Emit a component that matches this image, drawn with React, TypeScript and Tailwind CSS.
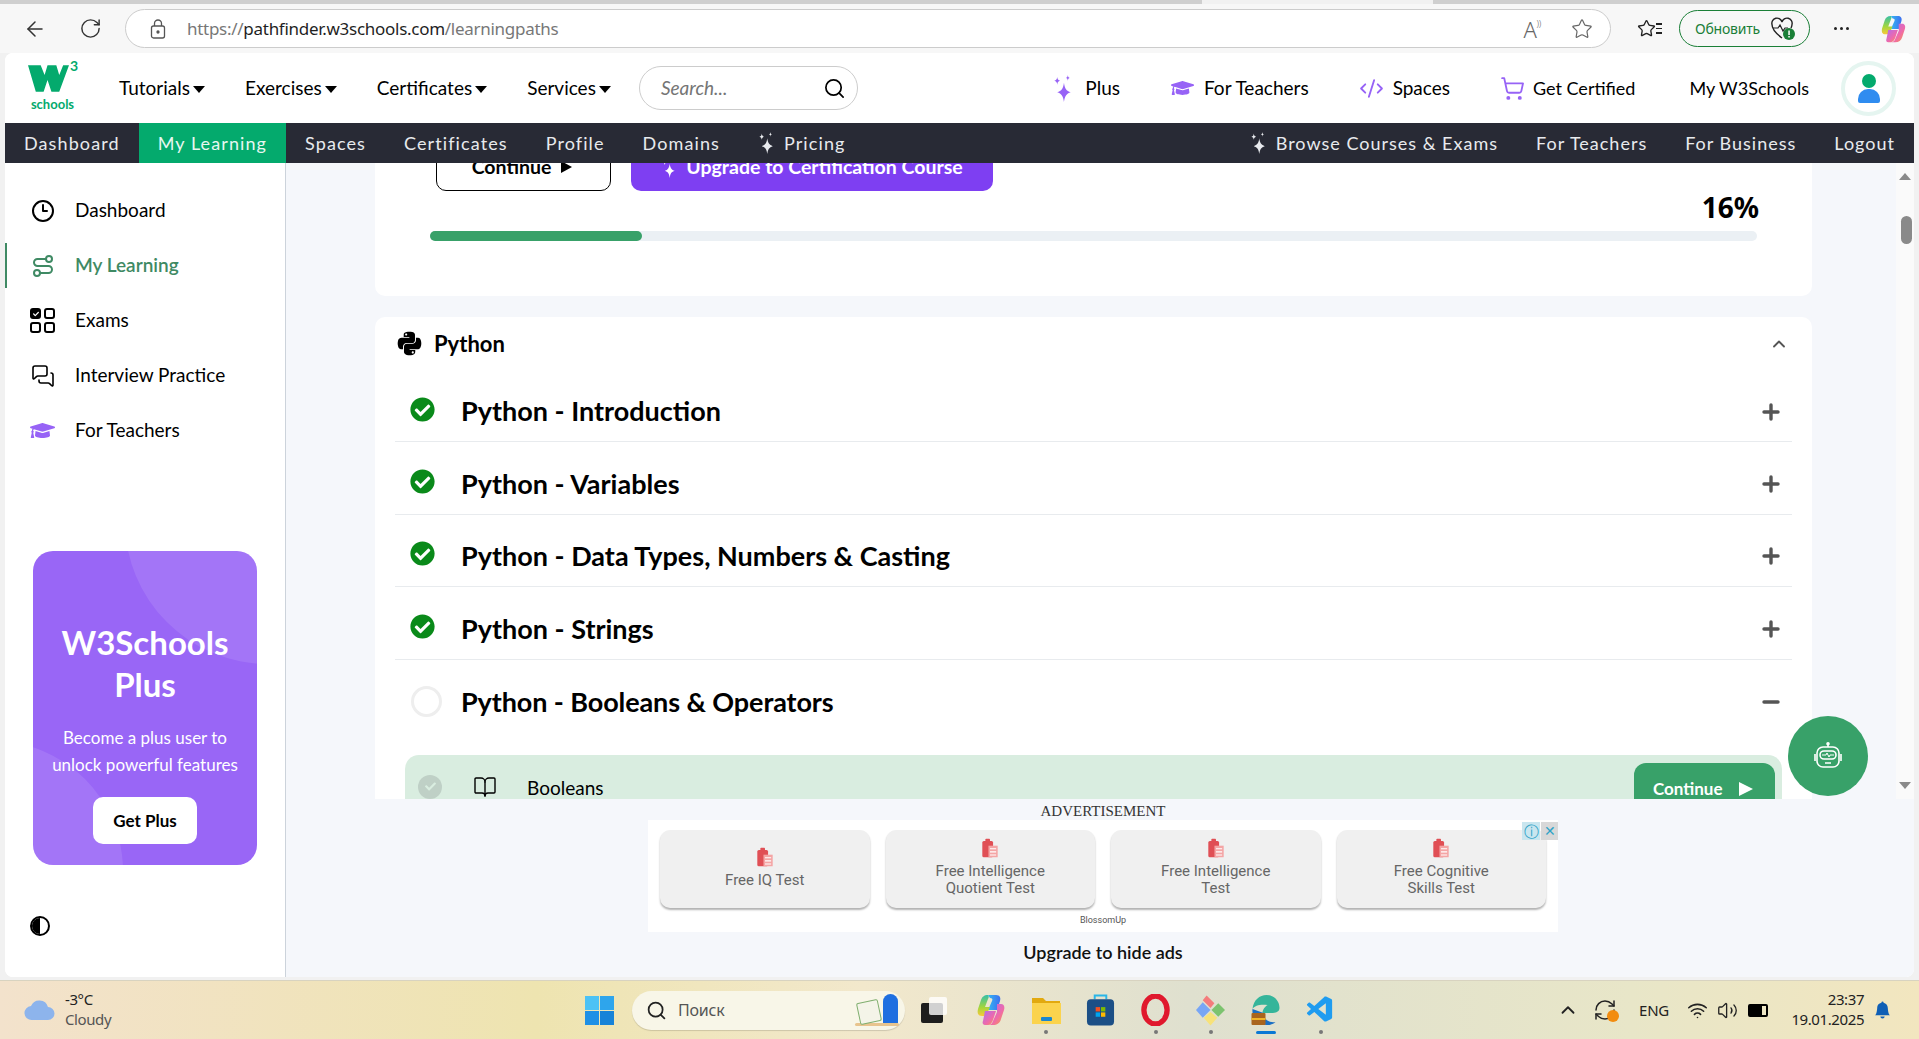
import { ArrowLeft, RotateCw, Star, Search, ChevronUp, Plus, Minus, BookOpen, Route, MessagesSquare, ShoppingCart, CodeXml, Clock3, Wifi, Volume2, RefreshCw } from "lucide-react";
import { FaPython, FaGraduationCap, FaCheckCircle, FaCheck } from "react-icons/fa";
import { BsBellFill } from "react-icons/bs";
import { VscVscode } from "react-icons/vsc";

const tutorials = ["Tutorials", "Exercises", "Certificates", "Services"];
const lessons = ["Python - Introduction", "Python - Variables", "Python - Data Types, Numbers & Casting", "Python - Strings"];
const ads = [
  ["Free IQ Test"],
  ["Free Intelligence", "Quotient Test"],
  ["Free Intelligence", "Test"],
  ["Free Cognitive", "Skills Test"],
];

function Sparkles({ className }: { className?: string }) {
  return (
    <svg viewBox="0 0 20 28" className={className} fill="currentColor">
      <path d="M11 8C11.8 14 13.5 16.5 18 18C13.5 19.5 11.8 22 11 28C10.2 22 8.5 19.5 4 18C8.5 16.5 10.2 14 11 8Z" />
      <path d="M4 2C4.3 4.5 5 5.4 7 6C5 6.6 4.3 7.5 4 10C3.7 7.5 3 6.6 1 6C3 5.4 3.7 4.5 4 2Z" />
      <path d="M15 0C15.2 2 15.7 2.6 17 3C15.7 3.4 15.2 4 15 6C14.8 4 14.3 3.4 13 3C14.3 2.6 14.8 2 15 0Z" />
    </svg>
  );
}

function Caret() {
  return <span className="ml-[3px] mt-[2px] h-0 w-0 border-x-[6px] border-t-[7px] border-x-transparent border-t-black" />;
}

function ExamsIcon() {
  return (
    <div className="grid w-[25px] grid-cols-2 gap-[3px]">
      <div className="flex h-[11px] items-center justify-center rounded-[3px] bg-black text-white">
        <FaCheck className="h-[6px] w-[6px]" />
      </div>
      <div className="h-[11px] rounded-[3px] border-2 border-black" />
      <div className="h-[11px] rounded-[3px] border-2 border-black" />
      <div className="h-[11px] rounded-[3px] border-2 border-black" />
    </div>
  );
}

function ClipboardIcon() {
  return (
    <svg viewBox="0 0 22 26" className="h-[20px] w-[20px]">
      <rect x="1" y="4" width="14" height="21" rx="2" fill="#e04f55" />
      <rect x="5" y="1" width="6" height="5" rx="1" fill="#e04f55" />
      <rect x="9" y="10" width="12" height="15" fill="#f4a5a5" />
      <path d="M11 14h8M11 18h8M11 22h8" stroke="#fff" strokeWidth="1.4" />
    </svg>
  );
}

function CopilotIcon({ className, id }: { className?: string; id: string }) {
  return (
    <svg viewBox="0 0 30 32" className={className}>
      <defs>
        <linearGradient id={`${id}a`} x1="0" y1="0" x2="1" y2="0">
          <stop offset="0" stopColor="#35b6f2" />
          <stop offset="1" stopColor="#3d6ff0" />
        </linearGradient>
        <linearGradient id={`${id}b`} x1="0" y1="0" x2="1" y2="1">
          <stop offset="0" stopColor="#b06cf0" />
          <stop offset="0.6" stopColor="#f06aa8" />
          <stop offset="1" stopColor="#f8a03c" />
        </linearGradient>
        <linearGradient id={`${id}c`} x1="0" y1="0" x2="0" y2="1">
          <stop offset="0" stopColor="#35c0a8" />
          <stop offset="0.6" stopColor="#a6d63a" />
          <stop offset="1" stopColor="#f8c83c" />
        </linearGradient>
      </defs>
      <path d="M12 1h8c4 0 5 3 4 6l-3 9h-9l4-9c1-2 0-3-2-3Z" fill={`url(#${id}a)`} />
      <path d="M21 10h4c3 0 4 3 3 6l-3 9c-1 4-4 6-8 6h-5c2 0 4-1 5-4l4-9Z" fill={`url(#${id}b)`} />
      <path d="M12 1C8 1 6 3 5 6L2 15c-1 4 0 7 4 7h4l4-9H9l3-8c1-2 1-3 0-4Z" fill={`url(#${id}c)`} />
      <path d="M9 17h11l-3 9c-1 3-3 5-5 5H9c-2 0-3-2-2-4Z" fill={`url(#${id}b)`} />
    </svg>
  );
}

function Toolbar() {
  return (
    <div className="flex h-[49px] shrink-0 items-center bg-[#f7f7f7] text-[#333]">
      <ArrowLeft className="ml-[23px] h-[24px] w-[24px]" strokeWidth={1.5} />
      <RotateCw className="ml-[32px] h-[23px] w-[23px]" strokeWidth={1.5} />
      <div className="ml-[23px] flex h-[39px] w-[1486px] items-center rounded-full border border-[#ccc] bg-white pl-[24px] pr-[17px] font-['Noto_Sans'] text-[17px] tracking-[-0.28px]">
        <svg viewBox="0 0 16 20" className="h-[20px] w-[16px] text-[#555]" fill="none" stroke="currentColor" strokeWidth="1.3">
          <rect x="1.5" y="7" width="13" height="12" rx="2" />
          <path d="M4.5 7V4.5a3.5 3.5 0 0 1 7 0V7" />
          <circle cx="8" cy="13" r="1" fill="currentColor" />
        </svg>
        <span className="ml-[21px] text-[#777]">https://</span>
        <span className="text-[#1f1f1f]">pathfinder.w3schools.com</span>
        <span className="text-[#777]">/learningpaths</span>
        <div className="ml-auto flex items-center gap-[30px] text-[#666]">
          <span className="flex items-start text-[22px] font-light leading-none">
            A<span className="text-[9px] leading-[12px]">))</span>
          </span>
          <Star className="h-[22px] w-[22px]" strokeWidth={1.3} />
        </div>
      </div>
      <div className="ml-[26px] flex w-[26px] items-center">
        <Star className="h-[19px] w-[19px] text-[#222]" strokeWidth={1.7} />
        <div className="flex flex-col gap-[3px]">
          <span className="h-[1.5px] w-[6px] bg-[#222]" />
          <span className="h-[1.5px] w-[6px] bg-[#222]" />
          <span className="h-[1.5px] w-[6px] bg-[#222]" />
        </div>
      </div>
      <div className="ml-[16px] flex h-[37px] w-[131px] items-center rounded-full border border-[#1a7f37] pl-[15px] font-['Noto_Sans'] text-[14px] tracking-[-0.2px] text-[#1a7f37]">
        Обновить
        <svg viewBox="0 0 26 24" className="ml-[10px] h-[24px] w-[26px]">
          <path d="M12 21C4 15 2 11 2 7.500A5 5 0 0 1 12 5a5 5 0 0 1 10 2.500C22 9 21.500 10 21 11" fill="none" stroke="#222" strokeWidth="1.4" />
          <path d="M3 11h5l2-3 3 6 2-3h3" fill="none" stroke="#222" strokeWidth="1.2" />
          <circle cx="19" cy="17" r="6" fill="#1a7f37" />
          <rect x="18.300" y="13.500" width="1.500" height="4.500" fill="#fff" />
          <rect x="18.300" y="19" width="1.500" height="1.500" fill="#fff" />
        </svg>
      </div>
      <div className="ml-[24px] flex gap-[3px]">
        <span className="h-[3px] w-[3px] rounded-full bg-[#222]" />
        <span className="h-[3px] w-[3px] rounded-full bg-[#222]" />
        <span className="h-[3px] w-[3px] rounded-full bg-[#222]" />
      </div>
      <CopilotIcon className="ml-[31px] h-[28px] w-[27px]" id="cptop" />
    </div>
  );
}

function Header() {
  return (
    <div className="flex h-[70px] shrink-0 items-center bg-white text-[19px] text-black">
      <div className="relative ml-[23px] flex w-[49px] flex-col items-center">
        <svg viewBox="0 0 42 27" className="h-[27px] w-[41px] self-start">
          <path d="M0 0h13l4 10 3-10h9l3 10 4-10h6L32 27h-8l-4-12-4 12H8Z" fill="#04aa6d" />
        </svg>
        <span className="absolute -right-[1px] -top-[6px] text-[14px] font-bold leading-none text-[#04aa6d]">3</span>
        <span className="mt-[4px] text-[13px] font-bold leading-[16px] text-[#04aa6d]">schools</span>
      </div>
      <nav className="ml-[42px] flex items-center gap-[40px]">
        {tutorials.map((t) => (
          <div key={t} className="flex items-center">
            {t}
            <Caret />
          </div>
        ))}
      </nav>
      <div className="ml-[28px] flex h-[44px] w-[219px] items-center justify-between rounded-full border border-[#ccc] pl-[21px] pr-[11px]">
        <span className="italic text-[#757575]">Search...</span>
        <Search className="h-[23px] w-[23px]" strokeWidth={1.8} />
      </div>
      <div className="ml-auto flex items-center pr-[18px]">
        <div className="flex items-center">
          <Sparkles className="h-[27px] w-[20px] text-[#9763f6]" />
          <span className="ml-[12px]">Plus</span>
        </div>
        <div className="ml-[51px] flex items-center">
          <FaGraduationCap className="h-[22px] w-[23px] text-[#9763f6]" />
          <span className="ml-[10px]">For Teachers</span>
        </div>
        <div className="ml-[50px] flex items-center">
          <CodeXml className="h-[25px] w-[25px] text-[#9763f6]" strokeWidth={1.8} />
          <span className="ml-[9px]">Spaces</span>
        </div>
        <div className="ml-[50px] flex items-center">
          <ShoppingCart className="h-[25px] w-[25px] text-[#9763f6]" strokeWidth={1.8} />
          <span className="ml-[8px] text-[18px]">Get Certified</span>
        </div>
        <span className="ml-[54px] text-[18px]">My W3Schools</span>
        <div className="ml-[32px] flex h-[55px] w-[55px] flex-col items-center justify-center rounded-full border-4 border-[#e5f5f0]">
          <div className="h-[14px] w-[14px] rounded-full bg-[#04aa6d]" />
          <div className="mt-[1px] h-[14px] w-[22px] rounded-t-[10px] rounded-b-[2px] bg-[#2f8cf0]" />
        </div>
      </div>
    </div>
  );
}

function DarkBar() {
  return (
    <div className="flex h-[40px] shrink-0 items-center bg-[#282a35] text-[18px] tracking-[1.1px] text-[#e8eaee]">
      <div className="px-[19px]">Dashboard</div>
      <div className="flex h-full items-center bg-[#04aa6d] px-[19px] text-[#e7f7f0]">My Learning</div>
      <div className="px-[19px]">Spaces</div>
      <div className="px-[19px]">Certificates</div>
      <div className="px-[19px]">Profile</div>
      <div className="px-[19px]">Domains</div>
      <div className="flex items-center px-[19px]">
        <Sparkles className="mr-[9px] h-[22px] w-[17px]" />
        Pricing
      </div>
      <div className="ml-auto flex items-center tracking-[1px]">
        <div className="flex items-center px-[19px]">
          <Sparkles className="mr-[9px] h-[22px] w-[17px]" />
          Browse Courses & Exams
        </div>
        <div className="px-[19px]">For Teachers</div>
        <div className="px-[19px]">For Business</div>
        <div className="px-[19px]">Logout</div>
      </div>
    </div>
  );
}

function Sidebar() {
  const items = [
    { label: "Dashboard", icon: <Clock3 className="h-[24px] w-[24px]" strokeWidth={2} /> },
    { label: "My Learning", icon: <Route className="h-[24px] w-[24px]" strokeWidth={2} />, active: true },
    { label: "Exams", icon: <ExamsIcon /> },
    { label: "Interview Practice", icon: <MessagesSquare className="h-[24px] w-[24px]" strokeWidth={1.6} /> },
    { label: "For Teachers", icon: <FaGraduationCap className="h-[25px] w-[25px] text-[#9763f6]" /> },
  ];
  return (
    <aside className="flex w-[281px] shrink-0 flex-col border-r border-[#ccd3db] bg-white text-[19px] text-black">
      <div className="mt-[25px] flex flex-col gap-[10px]">
        {items.map((it) => (
          <div
            key={it.label}
            className={
              it.active
                ? "flex h-[45px] items-center border-l-[2px] border-[#3f8a64] pl-[23px] font-semibold text-[#3f8a64]"
                : "flex h-[45px] items-center border-l-[2px] border-transparent pl-[23px]"
            }
          >
            <span className="flex w-[25px] justify-center">{it.icon}</span>
            <span className="ml-[20px]">{it.label}</span>
          </div>
        ))}
      </div>
      <div className="relative ml-[28px] mt-[98px] flex h-[314px] w-[224px] flex-col items-center overflow-hidden rounded-[20px] bg-[#9966f6] text-white">
        <div className="absolute -top-[173px] left-[92px] h-[286px] w-[286px] rounded-full bg-white/10" />
        <div className="absolute -left-[170px] top-[190px] h-[260px] w-[260px] rounded-full bg-white/10" />
        <div className="relative mt-[70px] text-center text-[33px] font-bold leading-[42px]">
          W3Schools
          <br />
          Plus
        </div>
        <div className="relative mt-[19px] text-center text-[17px] leading-[27px]">
          Become a plus user to
          <br />
          unlock powerful features
        </div>
        <div className="relative mt-[19px] flex h-[47px] w-[104px] items-center justify-center rounded-[10px] bg-white text-[17px] font-bold text-black">
          Get Plus
        </div>
      </div>
      <div className="ml-[25px] mt-[51px] flex h-[20px] w-[20px] overflow-hidden rounded-full border-2 border-black">
        <div className="h-full w-1/2 bg-black" />
      </div>
    </aside>
  );
}

function LessonRow({ title }: { title: string }) {
  return (
    <div className="flex h-[72.4px] items-center border-b border-[#e8ebee] pt-[12px]">
      <FaCheckCircle className="ml-[15px] -mt-[5px] h-[25px] w-[25px] text-[#0a8a1a]" />
      <span className="ml-[26px] text-[27px] font-bold text-black">{title}</span>
      <Plus className="ml-auto mr-[9px] h-[24px] w-[24px] text-[#555]" strokeWidth={3.4} />
    </div>
  );
}

function Scrollbar() {
  return (
    <div className="flex w-[18px] shrink-0 flex-col items-center bg-[#fafafa] pt-[10px]">
      <div className="h-0 w-0 border-x-[6px] border-b-[7px] border-x-transparent border-b-[#8a8a8a]" />
      <div className="ml-[3px] mt-[36px] h-[28px] w-[11px] rounded-full bg-[#8a8a8a]" />
      <div className="mt-auto mb-[10px] h-0 w-0 border-x-[6px] border-t-[7px] border-x-transparent border-t-[#8a8a8a]" />
    </div>
  );
}

function Main() {
  return (
    <main className="flex min-w-0 flex-1 flex-col bg-[#f5f7fb]">
      <div className="relative flex h-[636px] shrink-0 overflow-hidden">
        <div className="min-w-0 flex-1 pl-[89px] pr-[84px]">
          <div className="-mt-[40px] rounded-b-[10px] bg-white pb-[55px] pl-[55px] pr-[55px] pt-[20px]">
            <div className="flex gap-[20px] pl-[6px]">
              <div className="flex h-[48px] w-[175px] items-center justify-center rounded-[10px] border border-black pr-[3px] text-[19.5px] font-bold text-black">
                Continue
                <span className="ml-[10px] h-0 w-0 border-y-[6px] border-l-[11px] border-y-transparent border-l-black" />
              </div>
              <div className="flex h-[48px] w-[362px] items-center justify-center rounded-[10px] bg-[#7e3ff2] text-[19.5px] font-bold text-white">
                <Sparkles className="mr-[9px] mt-[2px] h-[20px] w-[16px]" />
                Upgrade to Certification Course
              </div>
            </div>
            <div className="-mr-[2px] h-[40px] pt-[1px] text-right font-['Noto_Sans'] text-[28px] font-bold leading-[30px] text-black">16%</div>
            <div className="h-[10px] rounded-full bg-[#ebf0f4]">
              <div className="h-full w-[212px] rounded-full bg-[#38a169]" />
            </div>
          </div>
          <div className="mt-[21px] rounded-t-[10px] bg-white pl-[20px] pr-[20px]">
            <div className="flex h-[53px] items-center">
              <FaPython className="ml-[1px] h-[27px] w-[27px] text-black" />
              <span className="ml-[11px] text-[22px] font-bold text-black">Python</span>
              <ChevronUp className="ml-auto mr-[3px] h-[20px] w-[20px] text-[#555]" strokeWidth={2.2} />
            </div>
            {lessons.map((l) => (
              <LessonRow key={l} title={l} />
            ))}
            <div className="flex h-[72.4px] items-center pt-[12px]">
              <div className="ml-[16px] h-[31px] w-[31px] rounded-full border-[3px] border-[#eeeeee]" />
              <span className="ml-[19px] text-[27px] font-bold tracking-[-0.1px] text-black">Python - Booleans & Operators</span>
              <Minus className="ml-auto mr-[9px] h-[24px] w-[24px] text-[#555]" strokeWidth={3.4} />
            </div>
            <div className="ml-[10px] mr-[10px] mt-[23px] flex h-[70px] items-start rounded-[14px] bg-[#d9ede0] pl-[13px] pr-[7px] pt-[8px]">
              <div className="mt-[12px] flex h-[24px] w-[24px] items-center justify-center rounded-full bg-[#bfd0c6] text-[#d9ede0]">
                <FaCheck className="h-[11px] w-[11px]" />
              </div>
              <BookOpen className="ml-[31px] mt-[12px] h-[24px] w-[24px] text-black" strokeWidth={1.4} />
              <span className="ml-[30px] mt-[13px] text-[19px] leading-[24px] text-black">Booleans</span>
              <div className="ml-auto flex h-[60px] w-[141px] items-start rounded-[12px] bg-[#38a169] pl-[19px] pt-[14px] text-[17px] font-bold leading-[24px] text-white">
                Continue
                <span className="ml-[16px] mt-[5px] h-0 w-0 border-y-[7px] border-l-[14px] border-y-transparent border-l-white" />
              </div>
            </div>
          </div>
        </div>
        <Scrollbar />
        <div className="absolute bottom-[3px] right-[46px] flex h-[80px] w-[80px] items-center justify-center rounded-full bg-[#38a169]">
          <svg viewBox="0 0 30 28" className="h-[28px] w-[30px]" fill="none" stroke="#fff" strokeWidth="1.6">
            <path d="M15 5V2" />
            <circle cx="15" cy="1.800" r="1" fill="#fff" />
            <rect x="4" y="5" width="22" height="20" rx="6" />
            <rect x="7" y="9" width="16" height="8" rx="4" />
            <path d="M9 13h4l1-2 2 4 1-2h4" strokeWidth="1" />
            <path d="M12 21h6M2 12v7M28 12v7" />
          </svg>
        </div>
      </div>
      <div className="flex flex-1 flex-col items-center pl-[6px]">
        <div className="mt-[4px] font-['Liberation_Serif'] text-[15px] leading-[17px] text-[#333]">ADVERTISEMENT</div>
        <div className="relative flex h-[112px] w-[910px] flex-col bg-white px-[12px] pt-[10px]">
          <div className="absolute right-0 top-[2px] flex gap-[1px]">
            <div className="flex h-[18px] w-[18px] items-center justify-center bg-[#c9e6ef] text-[15px] leading-none text-[#2fa3c7]">ⓘ</div>
            <div className="flex h-[18px] w-[17px] items-center justify-center bg-[#d8d8d8] text-[14px] leading-none text-[#2fa3c7]">✕</div>
          </div>
          <div className="flex gap-[16px]">
            {ads.map((lines, i) => (
              <div key={i} className="flex h-[78px] w-[210px] flex-col items-center justify-center rounded-[10px] bg-[#f0f0f0] font-['Roboto'] text-[15px] leading-[17px] text-[#666] shadow-[0_2px_2px_rgba(0,0,0,0.3)]">
                <div className="-mt-[3px]">
                  <ClipboardIcon />
                </div>
                <div className="mt-[5px] text-center">
                  {lines.map((l) => (
                    <div key={l}>{l}</div>
                  ))}
                </div>
              </div>
            ))}
          </div>
          <div className="mt-[6px] text-center font-['Roboto'] text-[9px] leading-[12px] text-[#555]">BlossomUp</div>
        </div>
        <div className="mt-[11px] text-[18px] font-semibold leading-[18px] text-[#111]">Upgrade to hide ads</div>
      </div>
    </main>
  );
}

function AppIcon({ children, dot, active }: { children: React.ReactNode; dot?: boolean; active?: boolean }) {
  return (
    <div className="relative ml-[24px] flex w-[31px] justify-center">
      {children}
      {dot && <span className="absolute -bottom-[8px] h-[4px] w-[4px] rounded-full bg-[#777]" />}
      {active && <span className="absolute -bottom-[8px] h-[3px] w-[20px] rounded-full bg-[#0a78d4]" />}
    </div>
  );
}

function Taskbar() {
  return (
    <div className="flex h-[59px] shrink-0 items-center border-t border-[#d8d3c0] bg-[linear-gradient(90deg,#f3e2cc_0%,#eee4b0_28%,#f2e8cc_45%,#dfe0cf_62%,#e8e6c8_85%,#f2e6bf_100%)] font-['Noto_Sans'] text-[#222]">
      <svg viewBox="0 0 32 22" className="ml-[24px] h-[22px] w-[32px]">
        <path d="M8 21a7 7 0 0 1-1-14 9 9 0 0 1 17 1 6.500 6.500 0 0 1 0 13Z" fill="#8db4ec" />
      </svg>
      <div className="ml-[9px] flex w-[60px] -translate-y-[1px] flex-col text-[15px] leading-[20px] tracking-[-0.4px]">
        <span>-3°C</span>
        <span className="text-[#555]">Cloudy</span>
      </div>
      <div className="ml-[460px] grid h-[29px] w-[29px] grid-cols-2 gap-[1px]">
        <div className="bg-[#4cc2f5]" />
        <div className="bg-[#2ea5ec]" />
        <div className="bg-[#1e90e6]" />
        <div className="bg-[#1783d8]" />
      </div>
      <div className="ml-[18px] flex h-[39px] w-[273px] items-center rounded-full bg-[#f8f6e8] pl-[14px] pr-[6px] shadow-[0_1px_1px_rgba(0,0,0,0.15)]">
        <Search className="h-[21px] w-[21px]" strokeWidth={2} />
        <span className="ml-[11px] text-[16px] tracking-[-0.2px] text-[#555]">Поиск</span>
        <div className="ml-auto flex flex-col items-end">
          <div className="flex items-end pr-[1px]">
            <div className="h-[22px] w-[22px] -rotate-12 rounded-[2px] border border-[#7fae6e] bg-[#f4f4e8]" />
            <div className="ml-[3px] h-[29px] w-[15px] rounded-t-full rounded-b-[3px] bg-[#1f6fe0]" />
          </div>
          <div className="h-[3px] w-[44px] rounded-full bg-[#e8c48e]" />
        </div>
      </div>
      <svg viewBox="0 0 26 26" className="ml-[16px] h-[26px] w-[26px]">
        <rect x="0" y="6" width="22" height="20" rx="2" fill="#1d1d1d" />
        <rect x="8" y="0" width="18" height="18" rx="2" fill="#ffffff" fillOpacity="0.8" />
      </svg>
      <div className="ml-[29px] flex w-[30px] flex-col items-center">
        <CopilotIcon className="h-[32px] w-[30px]" id="cptask" />
      </div>
      <AppIcon dot>
        <svg viewBox="0 0 30 30" className="h-[32px] w-[30px]">
          <path d="M1 3h11l3 3h14v22H1Z" fill="#e2a90f" />
          <rect x="1" y="8" width="29" height="21" fill="#fbd34d" />
          <rect x="10" y="22" width="11" height="4" rx="1" fill="#1a86d0" />
        </svg>
      </AppIcon>
      <AppIcon>
        <svg viewBox="0 0 30 32" className="h-[32px] w-[29px]">
          <path d="M9 5V1h12v4" fill="none" stroke="#29b6e8" strokeWidth="2" />
          <rect x="1" y="5" width="28" height="27" rx="4" fill="#1c4f86" />
          <rect x="10" y="13" width="4.500" height="4.500" fill="#f25022" />
          <rect x="15.500" y="13" width="4.500" height="4.500" fill="#7fba00" />
          <rect x="10" y="18.500" width="4.500" height="4.500" fill="#00a4ef" />
          <rect x="15.500" y="18.500" width="4.500" height="4.500" fill="#ffb900" />
        </svg>
      </AppIcon>
      <AppIcon dot>
        <svg viewBox="0 0 30 32" className="h-[32px] w-[29px]">
          <ellipse cx="15" cy="16" rx="12" ry="14.500" fill="none" stroke="#e0182d" strokeWidth="5.500" />
        </svg>
      </AppIcon>
      <AppIcon dot>
        <svg viewBox="0 0 32 32" className="h-[32px] w-[31px]">
          <path d="M16 14 8 6l4-5 8 8Z" fill="#f47c7c" />
          <path d="M16 16 8 8 1 16l7 8Z" fill="#78a6f5" />
          <path d="M17 16l7-7 7 7-7 7Z" fill="#7cc36f" />
          <path d="M16 18l7 6-7 8-7-8Z" fill="#f7e27a" />
        </svg>
      </AppIcon>
      <AppIcon active>
        <svg viewBox="0 0 30 32" className="h-[32px] w-[31px]">
          <path d="M2 15C3 6 9 1 16 1c8 0 13 6 13 13 0 4-4 5-8 5H12c0-5 5-8 5-8-6-1-13 0-15 4Z" fill="#35b59a" />
          <path d="M2 15c-1 9 6 16 14 16 4 0 7-1 9-3-6 1-12-2-12-9Z" fill="#1a6fc4" />
          <rect x="1" y="19" width="14" height="12" rx="1" fill="#a9651e" />
          <rect x="1" y="24" width="14" height="2" fill="#f0b429" />
        </svg>
      </AppIcon>
      <AppIcon dot>
        <VscVscode className="h-[32px] w-[31px] text-[#1f9cf0]" />
      </AppIcon>
      <ChevronUp className="ml-[221px] h-[22px] w-[22px]" strokeWidth={2} />
      <div className="relative ml-[14px] h-[24px] w-[24px]">
        <RefreshCw className="h-[24px] w-[24px]" strokeWidth={1.5} />
        <span className="absolute -right-[2px] bottom-0 h-[12px] w-[12px] rounded-full bg-[#f28c0f]" />
      </div>
      <span className="ml-[22px] text-[15px] tracking-[-0.2px]">ENG</span>
      <Wifi className="ml-[18px] h-[21px] w-[21px]" strokeWidth={1.8} />
      <Volume2 className="ml-[9px] h-[21px] w-[21px]" strokeWidth={1.5} />
      <div className="relative ml-[10px] h-[13px] w-[20px] rounded-[2px] border-2 border-black">
        <div className="h-full w-3/4 bg-black" />
      </div>
      <div className="ml-[18px] flex w-[78px] -translate-y-[1px] flex-col items-end text-[15px] leading-[20px] tracking-[-0.4px]">
        <span>23:37</span>
        <span>19.01.2025</span>
      </div>
      <BsBellFill className="ml-[10px] h-[20px] w-[17px] text-[#0f5fb5]" />
    </div>
  );
}

export default function App() {
  return (
    <div className="flex h-[1039px] w-full flex-col overflow-hidden bg-[#f1f1f1] font-[Lato]">
      <div className="flex h-[4px] shrink-0">
        <div className="w-[1202px] bg-[#cfcfcf]" />
        <div className="w-[231px] bg-[#f1f1f1]" />
        <div className="flex-1 bg-[#cfcfcf]" />
      </div>
      <Toolbar />
      <div className="ml-[5px] mr-[5px] flex h-[924px] shrink-0 flex-col overflow-hidden rounded-[8px] bg-white">
        <Header />
        <DarkBar />
        <div className="flex min-h-0 flex-1">
          <Sidebar />
          <Main />
        </div>
      </div>
      <div className="flex-1" />
      <Taskbar />
    </div>
  );
}
